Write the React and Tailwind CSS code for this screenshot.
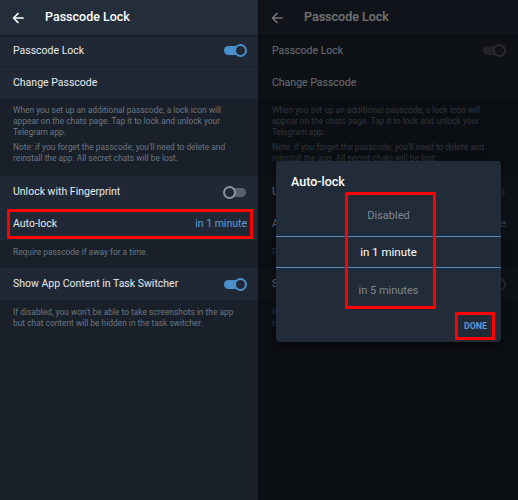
import React from "react";

function Toggle({ on, dim }) {
  const track = dim ? "bg-[#4a4f55]" : on ? "bg-[#4a8fc9]" : "bg-[#56626f]";
  const ring = dim ? "border-[#5d6166]" : on ? "border-[#4a8fc9]" : "border-[#8a949f]";
  return (
    <div className="relative w-[24px] h-[13px] flex items-center">
      <div className={`ml-[1px] h-[9px] w-[22px] rounded-full ${track}`} />
      <div
        className={`absolute top-0 ${on ? "right-0" : "left-0"} w-[13px] h-[13px] rounded-full border-2 ${ring} bg-[#1f2834]`}
      />
    </div>
  );
}

function Row({ title, right, border }) {
  return (
    <div
      className={`h-[32px] flex items-center justify-between pl-[13px] pr-[12px] ${
        border ? "border-b border-[#19212b]" : ""
      }`}
    >
      <span className="text-[10.5px] text-[#e8ebef]">{title}</span>
      {right}
    </div>
  );
}

function Info({ children, className }) {
  return (
    <div className={`px-[13px] text-[8.4px] leading-[11px] text-[#6c7782] ${className}`}>
      {children}
    </div>
  );
}

function Screen({ dim }) {
  return (
    <div className="relative w-[259px] h-[500px] bg-[#19202a] overflow-hidden">
      <div className="relative z-10 h-[35px] bg-[#242e3b] flex items-center shadow-[0_1px_2px_rgba(0,0,0,0.35)]">
        <svg width="12" height="12" viewBox="0 0 12 12" className="ml-[12px]">
          <path
            d="M11 6H1.5M6 1.5L1.5 6L6 10.5"
            fill="none"
            stroke="#ffffff"
            strokeWidth="1.7"
            strokeLinecap="round"
            strokeLinejoin="round"
          />
        </svg>
        <span className="ml-[21px] text-[12.5px] font-medium text-white">Passcode Lock</span>
      </div>
      <div className="bg-[#1f2834]">
        <Row title="Passcode Lock" right={<Toggle on dim={dim} />} border />
        <Row title="Change Passcode" />
      </div>
      <Info className="pt-[6px] pb-[10px] h-[77px]">
        <p>
          When you set up an additional passcode, a lock icon will appear on the chats page. Tap it to lock and unlock
          your Telegram app.
        </p>
        <p className="mt-[4px]">
          Note: if you forget the passcode, you'll need to delete and reinstall the app. All secret chats will be lost.
        </p>
      </Info>
      <div className="bg-[#1f2834]">
        <Row title="Unlock with Fingerprint" right={<Toggle dim={dim} />} />
        <Row
          title="Auto-lock"
          right={<span className="text-[10.5px] text-[#5b9ed6]">in 1 minute</span>}
        />
      </div>
      <Info className="pt-[7px] h-[28px]">
        <p>Require passcode if away for a time.</p>
      </Info>
      <div className="bg-[#1f2834]">
        <Row title="Show App Content in Task Switcher" right={<Toggle on dim={dim} />} />
      </div>
      <Info className="pt-[7px] leading-[10.5px]">
        <p>
          If disabled, you won't be able to take screenshots in the app but chat content will be hidden in the task
          switcher.
        </p>
      </Info>
      {!dim && (
        <div className="absolute left-[7px] top-[209px] w-[246px] h-[30px] border-[3px] border-[#ff0000]" />
      )}
      {dim && <div className="absolute inset-0 z-20 bg-[#000000]/55" />}
    </div>
  );
}

function Dialog() {
  return (
    <div className="absolute z-30 left-[17px] top-[161px] w-[225px] h-[181px] rounded-[4px] bg-[#222c39] shadow-[0_2px_8px_rgba(0,0,0,0.5)] flex flex-col">
      <div className="h-[33px] pt-[13px] pl-[15px] text-[12.5px] leading-[15px] font-medium text-white">
        Auto-lock
      </div>
      <div className="h-[42px] pt-[2px] flex items-center justify-center text-[11px] text-[#7f8892]">Disabled</div>
      <div className="h-[32px] pt-[2px] flex items-center justify-center border-y-[1.5px] border-[#4f8fc6] text-[11.5px] text-white">
        in 1 minute
      </div>
      <div className="h-[44px] pt-[2px] flex items-center justify-center text-[11px] text-[#7f8892]">in 5 minutes</div>
      <div className="h-[28px] pt-[1px] flex items-center justify-end pr-[14px] text-[8.8px] font-bold text-[#5b9bd5]">
        DONE
      </div>
      <div className="absolute left-[69px] top-[31px] w-[91px] h-[117px] border-[3px] border-[#ff0000]" />
      <div className="absolute left-[179px] top-[151px] w-[40px] h-[28px] border-[3px] border-[#ff0000]" />
    </div>
  );
}

export default function App() {
  return (
    <div className="w-[518px] h-[500px] flex bg-[#0a0d12] font-['Roboto',sans-serif] overflow-hidden">
      <div className="w-[258px] shrink-0 overflow-hidden">
        <Screen />
      </div>
      <div className="w-[1px] shrink-0 bg-[#0b0f14]" />
      <div className="relative w-[259px] shrink-0">
        <Screen dim />
        <Dialog />
      </div>
    </div>
  );
}
